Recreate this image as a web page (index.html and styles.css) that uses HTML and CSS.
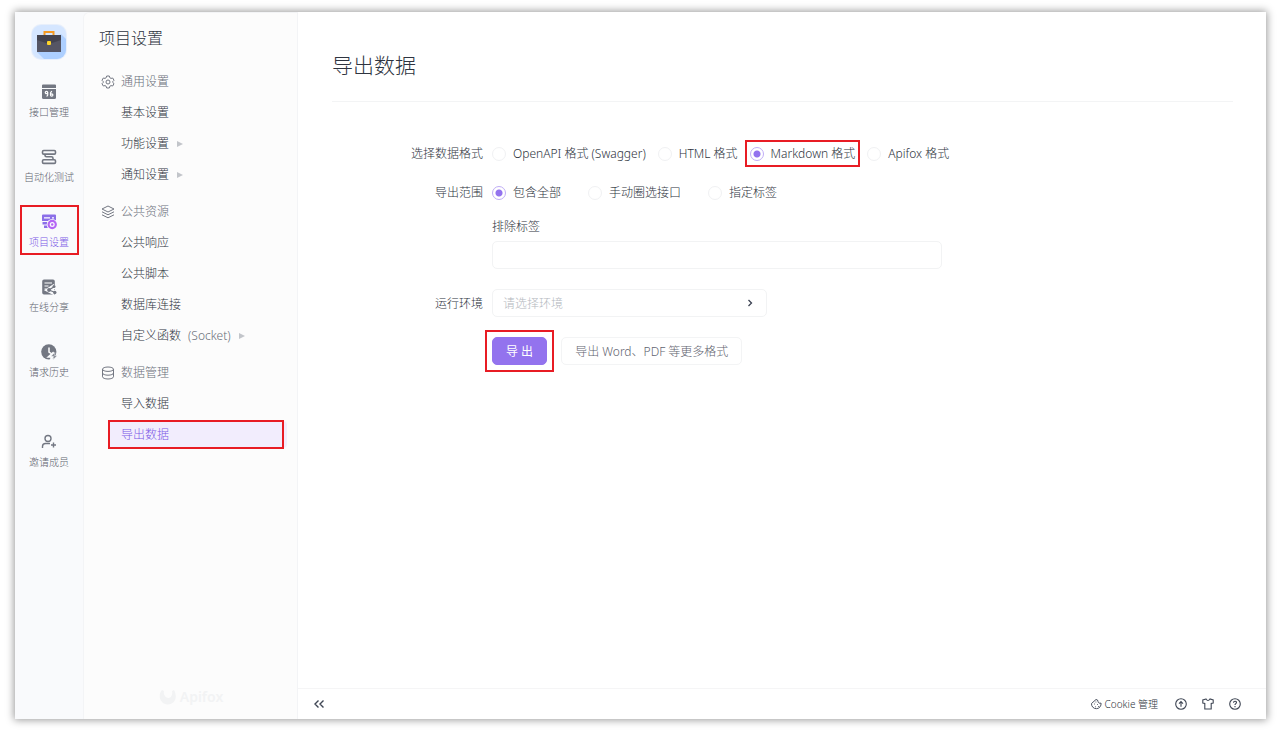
FILE: index.html
```html
<!DOCTYPE html>
<html lang="zh-CN">
<head>
<meta charset="UTF-8">
<meta name="viewport" content="width=device-width, initial-scale=1">
<title>项目设置 - Apifox</title>
<link rel="stylesheet" href="styles.css">
</head>
<body>

<div class="window">

<!-- left icon rail -->
<nav class="rail">
<a class="project" href="#" aria-label="项目">
<svg width="36" height="36" viewBox="0 0 36 36">
<defs><clipPath id="tile"><rect x="1" y="1" width="34" height="34" rx="9"/></clipPath></defs>
<rect x="0" y="0" width="36" height="36" rx="10" fill="#e8effb"/>
<g clip-path="url(#tile)">
<rect x="1" y="1" width="34" height="34" fill="#d5e6ff"/>
<path d="M30 10L36 16V36H14L6 28z" fill="#adcfff"/>
</g>
<path d="M13.500 11V8h9v3" fill="none" stroke="#f59a23" stroke-width="2"/>
<rect x="6" y="14" width="24" height="14" fill="#555564"/>
<path d="M6 11h24v5l-9 3h-6l-9-3z" fill="#43434f"/>
<rect x="16" y="17" width="4" height="4" rx="1" fill="#ffd428"/>
</svg>
</a>
<a class="rail-item" href="#">
<svg width="16" height="16" viewBox="0 0 16 16">
<path d="M1 1.500a1 1 0 0 1 1-1h12a1 1 0 0 1 1 1V4H1z" fill="#737782"/>
<path d="M1 5h14v8.500a1.500 1.500 0 0 1-1.500 1.500h-11A1.500 1.500 0 0 1 1 13.500z" fill="#737782"/>
<g fill="none" stroke="#fff" stroke-width="1.200"><circle cx="5.500" cy="8.500" r="1.200"/><path d="M6.700 8.500v2.500l-1 1.500"/><path d="M10.800 7L9.500 9v2"/><circle cx="10.700" cy="11" r="1.200"/></g>
</svg>
<span>接口管理</span>
</a>
<a class="rail-item" href="#">
<svg width="16" height="16" viewBox="0 0 16 16" fill="none" stroke="#737782" stroke-width="1.600">
<rect x="1.500" y="1.500" width="13" height="3.600" rx="1.200"/>
<path d="M4 5v1.300q0 1.500 1.500 1.500h5q1.500 0 1.500 1.500v1.500"/>
<rect x="1.500" y="10.800" width="13" height="3.600" rx="1.200"/>
</svg>
<span>自动化测试</span>
</a>
<a class="rail-item active marked" href="#">
<svg width="16" height="16" viewBox="0 0 16 16">
<path d="M2 .5h12a1 1 0 0 1 1 1V7H1V1.500a1 1 0 0 1 1-1z" fill="#8b6fe8"/>
<path d="M1.500 8H7v2.500H1.500zM3 11.500h4V14H3z" fill="#8b6fe8"/>
<path d="M3 3.800h6M11 3.800h2" stroke="#fff" stroke-width="1.200"/>
<circle cx="11.200" cy="10.500" r="5.500" fill="#f9fafc"/>
<circle cx="11.200" cy="10.500" r="3.600" fill="none" stroke="#b565f5" stroke-width="2.200"/>
<circle cx="11.200" cy="10.500" r="1.200" fill="#b565f5"/>
</svg>
<span>项目设置</span>
</a>
<a class="rail-item" href="#">
<svg width="16" height="16" viewBox="0 0 16 16">
<path d="M3 .5h9A1.800 1.800 0 0 1 13.800 2.300V15.500H3A1.800 1.800 0 0 1 1.200 13.700V2.300A1.800 1.800 0 0 1 3 .5z" fill="#737782"/>
<path d="M3.500 4h7.500M3.500 7h4M3.500 10h2" stroke="#fff" stroke-width="1.200"/>
<path d="M14 7l-6 4 6 3" fill="none" stroke="#f9fafc" stroke-width="5"/>
<path d="M13.500 7.500L8 11l6 2.500" fill="none" stroke="#737782" stroke-width="1.200"/>
<g fill="#737782"><circle cx="13" cy="7.600" r="1.500"/><circle cx="8" cy="11" r="1.900"/><circle cx="13.800" cy="13.500" r="1.700"/></g>
</svg>
<span>在线分享</span>
</a>
<a class="rail-item" href="#">
<svg width="16" height="16" viewBox="0 0 16 16">
<circle cx="7.800" cy="7.800" r="7.600" fill="#737782"/>
<path d="M8 3.500V8l3 2" fill="none" stroke="#fff" stroke-width="1.500"/>
<path d="M13 8.500l-4.500 4H11l-1 3.500" fill="none" stroke="#f9fafc" stroke-width="2.500"/>
<path d="M14 8.500l-4 3.700h3l-1 3.500 4-4h-2.500z" fill="#737782" stroke="#f9fafc" stroke-width=".5"/>
</svg>
<span>请求历史</span>
</a>
<a class="rail-item invite" href="#">
<svg width="16" height="16" viewBox="0 0 16 16" fill="none" stroke="#737782" stroke-width="1.400">
<circle cx="7" cy="4.500" r="3"/>
<path d="M1.500 14v-1.500a3 3 0 0 1 3-3H9M12.500 8.500v5M10 11h5"/>
</svg>
<span>邀请成员</span>
</a>
</nav>

<!-- settings menu -->
<aside class="sidebar">
<h2 class="sidebar-title">项目设置</h2>

<div class="group">
<div class="group-name">
<svg width="14" height="14" viewBox="0 0 14 14" fill="none" stroke="#737782"><path d="M5.700 1h2.600l.5 1.700 1.200.7 1.700-.4L13 5.300 11.800 6.500v1L13 8.700 11.700 11l-1.700-.4-1.200.7-.5 1.700H5.700l-.5-1.700-1.200-.7-1.700.4L1 8.700l1.200-1.200v-1L1 5.300 2.300 3l1.700.4 1.200-.7z"/><circle cx="7" cy="7" r="2"/></svg>
通用设置
</div>
<a class="entry" href="#">基本设置</a>
<a class="entry" href="#">功能设置<i class="arrow"></i></a>
<a class="entry" href="#">通知设置<i class="arrow"></i></a>
</div>

<div class="group">
<div class="group-name">
<svg width="14" height="14" viewBox="0 0 14 14" fill="none" stroke="#737782"><path d="M7 1l6 3-6 3-6-3zM1 6.800l6 3 6-3M1 9.800l6 3 6-3"/></svg>
公共资源
</div>
<a class="entry" href="#">公共响应</a>
<a class="entry" href="#">公共脚本</a>
<a class="entry" href="#">数据库连接</a>
<a class="entry" href="#">自定义函数<span class="hint">(Socket)</span><i class="arrow"></i></a>
</div>

<div class="group">
<div class="group-name">
<svg width="14" height="14" viewBox="0 0 14 14" fill="none" stroke="#737782"><ellipse cx="7" cy="3.200" rx="5.500" ry="2.200"/><path d="M1.500 3.200v7.600c0 1.200 2.500 2.200 5.500 2.200s5.500-1 5.500-2.200V3.200M1.500 7c0 1.200 2.500 2.200 5.500 2.200s5.500-1 5.500-2.200"/></svg>
数据管理
</div>
<a class="entry" href="#">导入数据</a>
<a class="entry selected" href="#">导出数据</a>
</div>

<div class="brand">
<svg width="18" height="16" viewBox="0 0 18 16"><path d="M3 1C-1 5 0 14 8 15.500 16 16 19 8 15 1l-2 1c1 5-2 7-4 7S4 6 5 2z" fill="#f2f3f4"/></svg>
Apifox
</div>
</aside>

<main class="main">
<div class="content">
<h1 class="page-title">导出数据</h1>

<form class="form">
<div class="row" role="radiogroup" aria-labelledby="format-label">
<div class="row-label" id="format-label">选择数据格式</div>
<div class="options">
<label class="option"><input type="radio" name="format">OpenAPI 格式 (Swagger)</label>
<label class="option"><input type="radio" name="format">HTML 格式</label>
<label class="option marked-option"><input type="radio" name="format" checked>Markdown 格式</label>
<label class="option"><input type="radio" name="format">Apifox 格式</label>
</div>
</div>

<div class="row" role="radiogroup" aria-labelledby="scope-label">
<div class="row-label" id="scope-label">导出范围</div>
<div class="options wide">
<label class="option"><input type="radio" name="scope" checked>包含全部</label>
<label class="option"><input type="radio" name="scope">手动圈选接口</label>
<label class="option"><input type="radio" name="scope">指定标签</label>
</div>
</div>

<div class="row tight">
<div class="field">
<label for="exclude">排除标签</label>
<input class="text-input" type="text" id="exclude">
</div>
</div>

<div class="row tight">
<label class="row-label" for="env">运行环境</label>
<div class="select-box">
<select id="env"><option>请选择环境</option></select>
<svg class="chevron" width="8" height="8" viewBox="0 0 8 8" fill="none" stroke="#3b4252" stroke-width="1.300"><path d="M2.500 1l3 3-3 3"/></svg>
</div>
</div>

<div class="row">
<div class="buttons">
<button class="btn primary" type="button">导 出</button>
<button class="btn" type="button">导出 Word、PDF 等更多格式</button>
</div>
</div>
</form>
</div>

<footer class="footer">
<button class="icon-btn" type="button" aria-label="收起"><svg width="12" height="12" viewBox="0 0 12 12" fill="none" stroke="#3f4654" stroke-width="1.400"><path d="M5.500 2.500L2 6l3.500 3.500M10.500 2.500L7 6l3.500 3.500"/></svg></button>
<div class="tools">
<a class="cookie" href="#">
<svg width="12" height="12" viewBox="0 0 12 12" fill="none" stroke="#4d5462"><path d="M6 1.500a2 2 0 0 1 2 2 2 2 0 0 0 3 1.500A4.800 4.800 0 1 1 1.500 5.500z"/><path d="M4 6h.8M7 6.500h.8M5 8.800h.8M8 8.500h.8M5.500 4h.8"/></svg>
Cookie 管理
</a>
<button class="icon-btn" type="button" aria-label="更新"><svg width="12" height="12" viewBox="0 0 12 12" fill="none" stroke="#3f4654" stroke-width="1.100"><circle cx="6" cy="6" r="5.300"/><path d="M6 8.800V3.800M4 5.600l2-2 2 2"/></svg></button>
<button class="icon-btn" type="button" aria-label="主题"><svg width="12" height="12" viewBox="0 0 12 12" fill="none" stroke="#3f4654" stroke-width="1.100"><path d="M4 1L.8 2v3l2 .5V11h6.400V5.500l2-.5V2L8 1Q6 4 4 1z"/></svg></button>
<button class="icon-btn" type="button" aria-label="帮助"><svg width="12" height="12" viewBox="0 0 12 12" fill="none" stroke="#3f4654" stroke-width="1.100"><circle cx="6" cy="6" r="5.300"/><path d="M4.500 4.800C4.500 2.700 7.500 2.700 7.500 4.600 7.500 5.700 6 5.700 6 7M6 8v1.200"/></svg></button>
</div>
</footer>
</main>

</div>

</body>
</html>
```
FILE: styles.css
```css
*{
box-sizing: border-box;
}
body{
margin: 0;
padding: 12px 14px 16px 15px;
min-height: 100vh;
display: flex;
background-color: #fff;
color: #2e3440;
font-family: "Noto Sans", "Noto Sans CJK SC", sans-serif;
font-size: 12px;
font-weight: 300;
line-height: 17px;
}
a{
color: inherit;
text-decoration: none;
}
h1, h2{
margin: 0;
font-weight: 300;
}
svg{
display: block;
flex: none;
}
button, input, select{
font: inherit;
color: inherit;
}

.window{
flex: 1;
display: flex;
background-color: #f9fafc;
box-shadow: 0 0 8px 1px rgba(0,0,0,0.4);
}

/* icon rail */
.rail{
width: 68px;
flex: none;
display: flex;
flex-direction: column;
align-items: center;
gap: 15px;
padding-top: 12px;
}
.rail-item{
width: 59px;
height: 50px;
display: flex;
flex-direction: column;
align-items: center;
gap: 4px;
padding-top: 7px;
border: 2px solid transparent;
color: #5f646f;
font-size: 10px;
line-height: 16px;
white-space: nowrap;
}
.rail-item.active{
color: #7a58e6;
}
.rail-item.marked{
border-color: #e81c24;
}
.invite{
margin-top: 25px;
}

/* settings menu */
.sidebar{
width: 215px;
flex: none;
display: flex;
flex-direction: column;
gap: 4px;
padding: 13px 10px 14px 15px;
background-color: #fcfcfc;
border: 1px solid #f3f4f6;
border-width: 1px 1px 0 1px;
border-top-left-radius: 6px;
}
.sidebar-title{
font-size: 16px;
line-height: 24px;
margin-bottom: 12px;
}
.group-name{
display: flex;
align-items: center;
gap: 6px;
height: 31px;
padding-left: 2px;
color: #6a6f7a;
}
.entry{
display: flex;
align-items: center;
height: 27px;
margin: 2px 0 4px 9px;
padding-left: 13px;
}
.hint{
margin-left: 7px;
color: #6a6f7a;
}
.arrow{
margin-left: 8px;
border: 3px solid transparent;
border-left: 6px solid #c2c5ca;
border-right: 0;
}
.selected{
position: relative;
border-radius: 4px;
background-color: #f2edfd;
color: #7a58e6;
}
.selected::after{
content: "";
position: absolute;
top: -1px;
right: 3px;
bottom: -1px;
left: 0;
border: 2px solid #e81c24;
}
.brand{
display: flex;
align-items: center;
justify-content: center;
gap: 3px;
margin-top: auto;
padding-right: 4px;
color: #f2f3f4;
font-size: 14px;
font-weight: 600;
}

/* export page */
.main{
flex: 1;
min-width: 0;
display: flex;
flex-direction: column;
background-color: #fff;
}
.content{
flex: 1;
padding: 38px 33px 20px 34px;
}
.page-title{
padding-bottom: 20px;
border-bottom: 1px solid #f3f4f5;
font-size: 21px;
line-height: 31px;
}
.form{
padding-top: 43px;
}
.row{
display: grid;
grid-template-columns: 151px minmax(0, 1fr);
column-gap: 9px;
align-items: center;
margin-bottom: 22px;
}
.tight{
margin-bottom: 20px;
}
.row-label{
text-align: right;
}
.options{
display: flex;
flex-wrap: wrap;
gap: 12px;
}
.options.wide{
gap: 27px;
}
.option{
display: flex;
align-items: center;
gap: 7px;
}
.marked-option{
outline: 2px solid #e81c24;
outline-offset: 3px;
}
.option input{
appearance: none;
width: 14px;
height: 14px;
margin: 0;
border: 1px solid #f0f1f3;
border-radius: 50%;
}
.option input:checked{
border-color: #c0adf6;
background: radial-gradient(circle, #9373ee 3px, transparent 4px);
}
.field{
grid-column: 2;
display: flex;
flex-direction: column;
gap: 6px;
margin-top: -5px;
}
.text-input{
width: 450px;
max-width: 100%;
height: 28px;
padding: 0 10px;
border: 1px solid #f2f3f4;
border-radius: 5px;
background-color: #fff;
}
.select-box{
position: relative;
width: 275px;
max-width: 100%;
}
.select-box select{
appearance: none;
display: block;
width: 100%;
height: 28px;
padding: 0 10px;
border: 1px solid #f2f3f4;
border-radius: 5px;
background-color: #fff;
color: #b4b8be;
}
.chevron{
position: absolute;
top: 10px;
right: 13px;
pointer-events: none;
}
.buttons{
grid-column: 2;
display: flex;
gap: 14px;
}
.btn{
height: 28px;
padding: 0 13px;
border: 1px solid #f3f4f5;
border-radius: 5px;
background-color: #fff;
color: #5f646f;
}
.primary{
position: relative;
border-color: #9373ee;
background-color: #9373ee;
color: #fff;
font-weight: 400;
}
.primary::after{
content: "";
position: absolute;
inset: -8px;
border: 2px solid #e81c24;
}

/* bottom bar */
.footer{
display: flex;
align-items: center;
justify-content: space-between;
height: 31px;
padding: 0 25px 0 15px;
border-top: 1px solid #f5f5f6;
}
.tools{
display: flex;
align-items: center;
gap: 15px;
}
.cookie{
display: flex;
align-items: center;
gap: 3px;
margin-right: 2px;
font-size: 10px;
}
.icon-btn{
padding: 0;
border: 0;
background: none;
}
```
